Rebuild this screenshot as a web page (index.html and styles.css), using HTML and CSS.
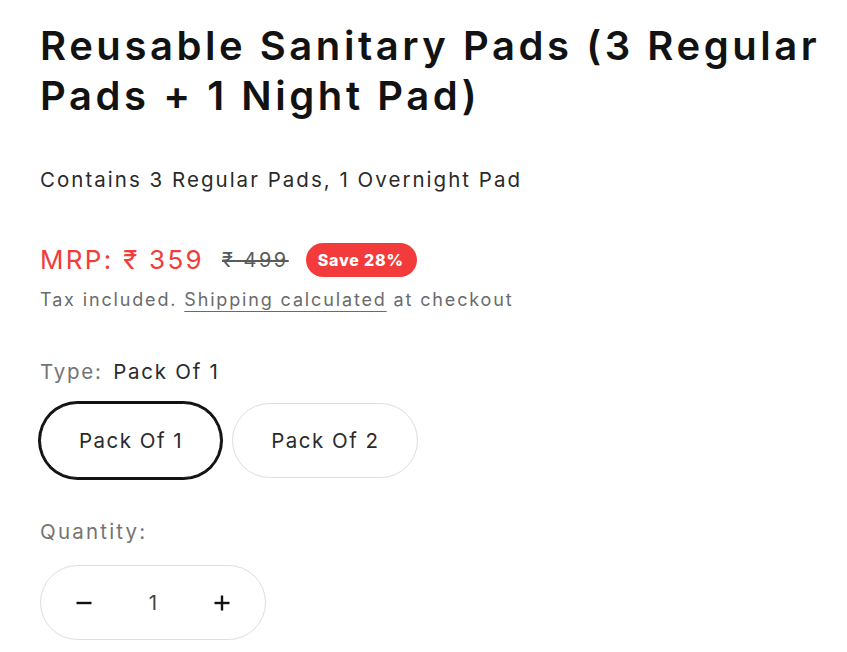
FILE: index.html
```html
<!DOCTYPE html>
<html lang="en">
<head>
<meta charset="utf-8">
<title>Product</title>
<link rel="stylesheet" href="styles.css">
</head>
<body>
<main class="product">
  <h1 class="title">Reusable Sanitary Pads (3 Regular Pads + 1 Night Pad)</h1>
  <p class="subtitle">Contains 3 Regular Pads, 1 Overnight Pad</p>
  <div class="price-row">
    <span class="price">MRP: ₹ 359</span>
    <s class="compare">₹ 499</s>
    <span class="badge">Save 28%</span>
  </div>
  <p class="tax">Tax included. <a href="#" class="link">Shipping calculated</a> at checkout</p>
  <div class="type-label"><span class="muted">Type:</span> <span class="value">Pack Of 1</span></div>
  <div class="options">
    <button class="pill pill-active">Pack Of 1</button>
    <button class="pill">Pack Of 2</button>
  </div>
  <div class="qty-label">Quantity:</div>
  <div class="qty">
    <button class="qty-btn" aria-label="Decrease">
      <svg width="16" height="16" viewBox="0 0 16 16"><rect x="0.5" y="6.8" width="15" height="2.4" fill="#121212"/></svg>
    </button>
    <span class="qty-value">1</span>
    <button class="qty-btn" aria-label="Increase">
      <svg width="16" height="16" viewBox="0 0 16 16"><rect x="0.5" y="6.8" width="15" height="2.4" fill="#121212"/><rect x="6.8" y="0.5" width="2.4" height="15" fill="#121212"/></svg>
    </button>
  </div>
</main>
</body>
</html>
```
FILE: styles.css
```css
* { box-sizing: border-box; }
html, body { margin: 0; padding: 0; background: #fff; }
body { font-family: "Inter", "Open Sans", sans-serif; color: #121212; }
.product { padding: 21px 0 0 40px; width: 847px; }
.title {
  margin: 0;
  font-size: 40px;
  font-weight: 600;
  line-height: 50px;
  letter-spacing: 3.55px;
  max-width: 800px;
  color: #121212;
}
.subtitle {
  margin: 45px 0 0;
  font-size: 20.5px;
  line-height: 28px;
  letter-spacing: 2.02px;
  color: #2a2a2a;
}
.price-row {
  margin-top: 49px;
  display: flex;
  align-items: center;
  height: 34px;
}
.price { color: #f23c3c; font-size: 26px; letter-spacing: 2.3px; line-height: 34px; }
.compare { color: #5a5a5a; font-size: 20px; margin-left: 18px; letter-spacing: 2.5px; line-height: 34px; }
.badge {
  margin-left: 17px;
  background: #f43b3b;
  color: #fff;
  font-weight: 800;
  font-size: 16px;
  letter-spacing: 0.8px;
  border-radius: 17px;
  height: 34px;
  padding: 0 13px 0 12px;
  display: inline-flex;
  align-items: center;
}
.tax {
  margin: 10px 0 0;
  font-size: 18px;
  line-height: 26px;
  color: #6b6b6b;
  letter-spacing: 1.85px;
}
.link { color: #6b6b6b; text-decoration: underline; text-decoration-thickness: 1px; text-underline-offset: 5px; }
.type-label { margin-top: 45px; font-size: 20.5px; letter-spacing: 1.75px; line-height: 28px; }
.muted { color: #747474; }
.value { color: #2a2a2a; margin-left: 3px; }
.options { margin-top: 17px; display: flex; gap: 11px; }
.pill {
  font-family: inherit;
  background: #fff;
  border: 1px solid #dedede;
  border-radius: 40px;
  height: 75px;
  padding: 0 37px 0 38px;
  font-size: 20.5px;
  letter-spacing: 1.5px;
  color: #2a2a2a;
}
.pill-active { border-color: #121212; box-shadow: 0 0 0 2px #121212; }
.qty-label { margin-top: 40px; font-size: 20.5px; color: #747474; letter-spacing: 2.2px; line-height: 28px; }
.qty {
  margin-top: 19px;
  width: 226px;
  height: 75px;
  border: 1px solid #dedede;
  border-radius: 40px;
  display: flex;
  align-items: center;
}
.qty-btn {
  background: none;
  border: 0;
  width: 86px;
  height: 60px;
  display: flex;
  align-items: center;
  justify-content: center;
  padding: 0;
  flex: none;
}
.qty-value { flex: 1; text-align: center; font-size: 20.5px; color: #444; }
```
